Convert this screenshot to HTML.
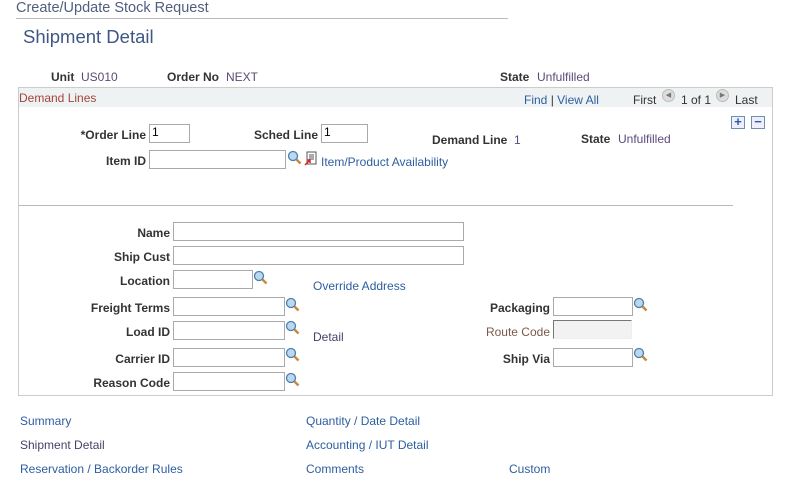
<!DOCTYPE html>
<html><head><meta charset="utf-8"><style>
body{margin:0;width:812px;height:481px;background:#fff;font-family:"Liberation Sans",Arial,sans-serif;font-size:12px;position:relative;overflow:hidden}
.a{position:absolute;white-space:nowrap}
.l{font-weight:bold;color:#333;text-align:right}
.v{color:#5a4a78}
.k{color:#2d5ea0}
.i{position:absolute;height:17px;border:1px solid #aaa;box-sizing:border-box;background:#fff;font-size:12px;padding-left:2px;line-height:15px}
.m{position:absolute;width:15px;height:15px}
</style></head><body>
<div class="a" style="left:16px;top:0;font-size:14.5px;color:#4f5f7e">Create/Update Stock Request</div>
<div class="a" style="left:16px;top:18px;width:492px;border-top:1px solid #bbb"></div>
<div class="a" style="left:23px;top:26px;font-size:18.5px;color:#3f5784">Shipment Detail</div>

<div class="a l" style="left:51px;top:70px">Unit</div><div class="a v" style="left:81px;top:70px">US010</div>
<div class="a l" style="left:167px;top:70px">Order No</div><div class="a v" style="left:226px;top:70px">NEXT</div>
<div class="a l" style="left:500px;top:70px">State</div><div class="a v" style="left:537px;top:70px">Unfulfilled</div>

<div class="a" style="left:18px;top:87px;width:753px;height:307px;border:1px solid #ccc"></div>
<div class="a" style="left:19px;top:88px;width:753px;height:19px;background:#eef2f3"></div>
<div class="a" style="left:19px;top:91px;color:#a3443a">Demand Lines</div>
<div class="a k" style="left:524px;top:93px">Find <span style="color:#333">|</span> View All</div>
<div class="a" style="left:633px;top:93px;color:#333">First</div>
<div class="a" style="left:662px;top:89px;width:13px;height:13px;border-radius:50%;background:#ddd;border:1px solid #bbb;box-sizing:border-box;font-size:7px;color:#777;text-align:center;line-height:11px">◀</div>
<div class="a" style="left:681px;top:93px;color:#333">1 of 1</div>
<div class="a" style="left:716px;top:89px;width:13px;height:13px;border-radius:50%;background:#ddd;border:1px solid #bbb;box-sizing:border-box;font-size:7px;color:#777;text-align:center;line-height:11px">▶</div>
<div class="a" style="left:735px;top:93px;color:#333">Last</div>

<div class="a" style="left:731px;top:116px;width:14px;height:13px;border:1px solid #6f8fb0;box-sizing:border-box;background:#eef;color:#2d5ea0;font-weight:bold;font-size:13px;line-height:10px;text-align:center">+</div>
<div class="a" style="left:751px;top:116px;width:14px;height:13px;border:1px solid #6f8fb0;box-sizing:border-box;background:#eef;color:#2d5ea0;font-weight:bold;font-size:13px;line-height:10px;text-align:center">−</div>

<div class="a l" style="right:666px;top:128px">*Order Line</div><div class="i" style="left:149px;top:124px;width:41px;height:19px">1</div>
<div class="a l" style="right:494px;top:128px">Sched Line</div><div class="i" style="left:321px;top:124px;width:47px;height:19px">1</div>
<div class="a l" style="left:432px;top:133px">Demand Line</div><div class="a v" style="left:514px;top:133px">1</div>
<div class="a l" style="left:581px;top:132px">State</div><div class="a v" style="left:618px;top:132px">Unfulfilled</div>
<div class="a l" style="right:666px;top:154px">Item ID</div><div class="i" style="left:149px;top:150px;width:137px;height:19px"></div>
<svg class="m" style="left:287px;top:150px" viewBox="0 0 15 15"><circle cx="6" cy="6" r="4.5" fill="#bcd8f0" stroke="#4a7fb0" stroke-width="1.3"/><path d="M9.5 9.5L13.5 13.5" stroke="#c58a3e" stroke-width="2.5"/></svg>
<svg class="m" style="left:304px;top:151px" viewBox="0 0 15 15"><rect x="3" y="1" width="9" height="12" fill="#fff" stroke="#555"/><path d="M5 4h5M5 6h5M5 8h5" stroke="#555"/><path d="M1 14L6 9M3 9h3v3" stroke="#d22" stroke-width="1.5" fill="none"/></svg>
<div class="a k" style="left:321px;top:155px">Item/Product Availability</div>

<div class="a" style="left:19px;top:205px;width:714px;border-top:1px solid #bbb"></div>

<div class="a l" style="right:642px;top:226px">Name</div><div class="i" style="left:173px;top:222px;width:291px;height:19px"></div>
<div class="a l" style="right:642px;top:250px">Ship Cust</div><div class="i" style="left:173px;top:246px;width:291px;height:19px"></div>
<div class="a l" style="right:642px;top:274px">Location</div><div class="i" style="left:173px;top:270px;width:80px;height:19px"></div>
<div class="a k" style="left:313px;top:279px">Override Address</div>
<div class="a l" style="right:642px;top:301px">Freight Terms</div><div class="i" style="left:173px;top:297px;width:112px;height:19px"></div>
<div class="a l" style="right:642px;top:325px">Load ID</div><div class="i" style="left:173px;top:321px;width:112px;height:19px"></div>
<div class="a" style="left:313px;top:330px;color:#4a3f6a">Detail</div>
<div class="a l" style="right:642px;top:352px">Carrier ID</div><div class="i" style="left:173px;top:348px;width:112px;height:19px"></div>
<div class="a l" style="right:642px;top:376px">Reason Code</div><div class="i" style="left:173px;top:372px;width:112px;height:19px"></div>

<div class="a l" style="right:262px;top:301px">Packaging</div><div class="i" style="left:553px;top:297px;width:80px;height:19px"></div>
<div class="a" style="right:262px;top:325px;color:#7a5a4a">Route Code</div><div class="i" style="left:553px;top:320px;width:79px;height:19px;background:#f2f2f2;border-color:#777 #eee #eee #777"></div>
<div class="a l" style="right:262px;top:352px">Ship Via</div><div class="i" style="left:553px;top:348px;width:80px;height:19px"></div>

<svg class="m" style="left:253px;top:270px" viewBox="0 0 15 15"><circle cx="6" cy="6" r="4.5" fill="#bcd8f0" stroke="#4a7fb0" stroke-width="1.3"/><path d="M9.5 9.5L13.5 13.5" stroke="#c58a3e" stroke-width="2.5"/></svg>
<svg class="m" style="left:285px;top:297px" viewBox="0 0 15 15"><circle cx="6" cy="6" r="4.5" fill="#bcd8f0" stroke="#4a7fb0" stroke-width="1.3"/><path d="M9.5 9.5L13.5 13.5" stroke="#c58a3e" stroke-width="2.5"/></svg>
<svg class="m" style="left:285px;top:320px" viewBox="0 0 15 15"><circle cx="6" cy="6" r="4.5" fill="#bcd8f0" stroke="#4a7fb0" stroke-width="1.3"/><path d="M9.5 9.5L13.5 13.5" stroke="#c58a3e" stroke-width="2.5"/></svg>
<svg class="m" style="left:285px;top:347px" viewBox="0 0 15 15"><circle cx="6" cy="6" r="4.5" fill="#bcd8f0" stroke="#4a7fb0" stroke-width="1.3"/><path d="M9.5 9.5L13.5 13.5" stroke="#c58a3e" stroke-width="2.5"/></svg>
<svg class="m" style="left:285px;top:372px" viewBox="0 0 15 15"><circle cx="6" cy="6" r="4.5" fill="#bcd8f0" stroke="#4a7fb0" stroke-width="1.3"/><path d="M9.5 9.5L13.5 13.5" stroke="#c58a3e" stroke-width="2.5"/></svg>
<svg class="m" style="left:633px;top:297px" viewBox="0 0 15 15"><circle cx="6" cy="6" r="4.5" fill="#bcd8f0" stroke="#4a7fb0" stroke-width="1.3"/><path d="M9.5 9.5L13.5 13.5" stroke="#c58a3e" stroke-width="2.5"/></svg>
<svg class="m" style="left:633px;top:347px" viewBox="0 0 15 15"><circle cx="6" cy="6" r="4.5" fill="#bcd8f0" stroke="#4a7fb0" stroke-width="1.3"/><path d="M9.5 9.5L13.5 13.5" stroke="#c58a3e" stroke-width="2.5"/></svg>

<div class="a k" style="left:20px;top:414px">Summary</div>
<div class="a" style="left:20px;top:438px;color:#4a3f6a">Shipment Detail</div>
<div class="a k" style="left:20px;top:462px">Reservation / Backorder Rules</div>
<div class="a k" style="left:306px;top:414px">Quantity / Date Detail</div>
<div class="a k" style="left:306px;top:438px">Accounting / IUT Detail</div>
<div class="a k" style="left:306px;top:462px">Comments</div>
<div class="a k" style="left:509px;top:462px">Custom</div>
</body></html>
